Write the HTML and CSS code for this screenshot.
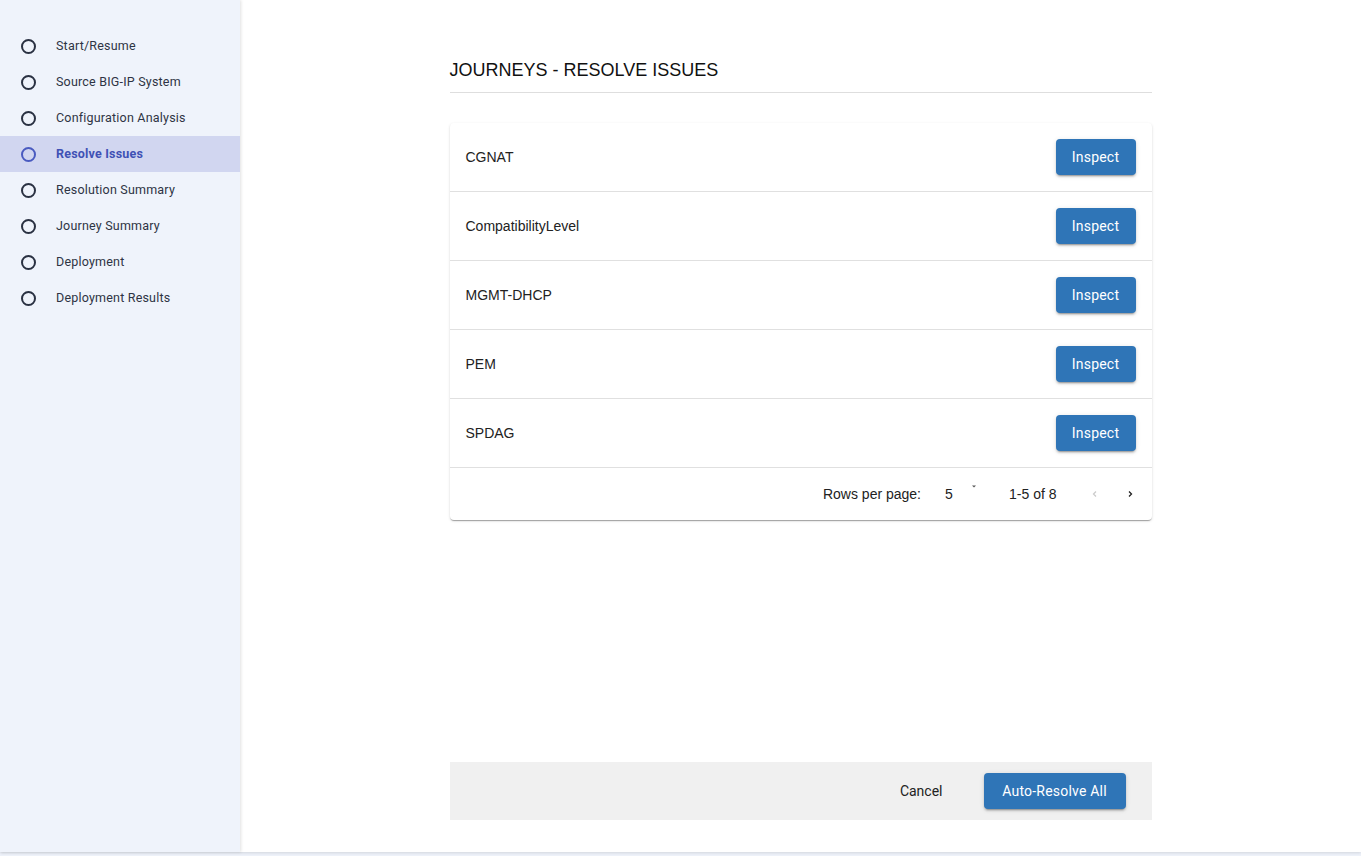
FILE: index.html
```html
<!DOCTYPE html>
<html>
<head>
<meta charset="utf-8">
<link rel="stylesheet" href="styles.css">
</head>
<body>
<div class="app">
  <aside class="sidebar">
    <ul class="steps">
      <li class="step"><span class="dot"></span><span class="label">Start/Resume</span></li>
      <li class="step"><span class="dot"></span><span class="label">Source BIG-IP System</span></li>
      <li class="step"><span class="dot"></span><span class="label">Configuration Analysis</span></li>
      <li class="step active"><span class="dot"></span><span class="label">Resolve Issues</span></li>
      <li class="step"><span class="dot"></span><span class="label">Resolution Summary</span></li>
      <li class="step"><span class="dot"></span><span class="label">Journey Summary</span></li>
      <li class="step"><span class="dot"></span><span class="label">Deployment</span></li>
      <li class="step"><span class="dot"></span><span class="label">Deployment Results</span></li>
    </ul>
  </aside>
  <main class="main">
    <div class="content">
      <h1 class="title">JOURNEYS - RESOLVE ISSUES</h1>
      <div class="card">
        <div class="row"><span class="name">CGNAT</span><button class="btn">Inspect</button></div>
        <div class="row"><span class="name">CompatibilityLevel</span><button class="btn">Inspect</button></div>
        <div class="row"><span class="name">MGMT-DHCP</span><button class="btn">Inspect</button></div>
        <div class="row"><span class="name">PEM</span><button class="btn">Inspect</button></div>
        <div class="row"><span class="name">SPDAG</span><button class="btn">Inspect</button></div>
        <div class="pager">
          <span class="rpp">Rows per page:</span>
          <span class="select"><span>5</span><svg class="caret" width="8" height="6" viewBox="0 0 8 6"><path d="M2 1.5h4L4 3.5z" fill="#555"/></svg></span>
          <span class="range">1-5 of 8</span>
          <span class="nav prev"><svg width="10" height="10" viewBox="0 0 10 10"><path d="M6 2.5L3.5 5L6 7.5" fill="none" stroke="#ccc" stroke-width="1.3"/></svg></span>
          <span class="nav next"><svg width="10" height="10" viewBox="0 0 10 10"><path d="M4 2.5L6.5 5L4 7.5" fill="none" stroke="#222" stroke-width="1.3"/></svg></span>
        </div>
      </div>
      <div class="spacer"></div>
      <div class="actions">
        <button class="text-btn">Cancel</button>
        <button class="btn big">Auto-Resolve All</button>
      </div>
    </div>
  </main>
</div>
</body>
</html>
```
FILE: styles.css
```css
* { box-sizing: border-box; }
html, body { margin: 0; padding: 0; }
body {
  background: #eef2fa;
  font-family: "Liberation Sans", Arial, sans-serif;
  color: #222;
  height: 856px;
  overflow: hidden;
}
.app {
  display: flex;
  height: 852px;
  background: #fff;
  box-shadow: 0 1px 3px rgba(0,0,0,0.12);
}
.sidebar {
  width: 240px;
  flex: none;
  background: #eff3fb;
  box-shadow: 1px 0 3px rgba(0,0,0,0.12);
  position: relative;
  z-index: 1;
  padding-top: 28px;
}
.steps { list-style: none; margin: 0; padding: 0; width: 240px; }
.step {
  display: flex;
  align-items: center;
  height: 36px;
  padding-left: 21px;
  font-family: Roboto, "Liberation Sans", sans-serif;
  font-size: 12.5px;
  letter-spacing: 0.2px;
  color: #2e3444;
}
.label { margin-top: -2px; }
.dot {
  width: 15px;
  height: 15px;
  border: 2px solid #2a3142;
  border-radius: 50%;
  margin-right: 20px;
  flex: none;
}
.step.active { background: #d1d6f0; color: #3f51b5; font-weight: 700; }
.step.active .dot { border-color: #4a5bc0; }
.main {
  flex: 1;
  display: flex;
  justify-content: center;
}
.content {
  width: 702px;
  display: flex;
  flex-direction: column;
  padding-top: 58px;
  padding-bottom: 32px;
}
.title {
  margin: 0;
  font-weight: 400;
  font-size: 18px;
  line-height: 24px;
  color: #111;
  padding-bottom: 10px;
  border-bottom: 1px solid #dedede;
}
.card {
  margin-top: 30px;
  background: #fff;
  border-radius: 4px;
  box-shadow: 0 2px 1px -1px rgba(0,0,0,0.2), 0 1px 1px 0 rgba(0,0,0,0.14), 0 1px 3px 0 rgba(0,0,0,0.12);
}
.row {
  height: 69px;
  display: flex;
  align-items: center;
  justify-content: space-between;
  padding: 0 16px;
  border-bottom: 1px solid #e0e0e0;
  font-size: 14px;
}
.name { color: #222; }
.btn {
  height: 36px;
  width: 80px;
  background: #2f75b7;
  color: #fff;
  border: none;
  border-radius: 4px;
  font-family: Roboto, "Liberation Sans", sans-serif;
  font-size: 14px;
  letter-spacing: 0.2px;
  box-shadow: 0 3px 1px -2px rgba(0,0,0,0.2), 0 2px 2px 0 rgba(0,0,0,0.14), 0 1px 5px 0 rgba(0,0,0,0.12);
  padding: 0;
}
.pager {
  height: 52px;
  display: flex;
  align-items: center;
  justify-content: flex-end;
  font-size: 14px;
  padding-right: 4px;
  color: #222;
}
.rpp { margin-right: 24px; }
.select { display: flex; align-items: flex-start; width: 44px; }
.caret { margin-left: 17px; margin-top: -2px; }
.range { margin-left: 20px; margin-right: 21px; }
.nav { width: 35px; display: flex; justify-content: center; align-items: center; }
.spacer { flex: 1; }
.actions {
  height: 58px;
  background: #f0f0f0;
  display: flex;
  align-items: center;
  justify-content: flex-end;
  padding-right: 26px;
}
.text-btn {
  background: none;
  border: none;
  font-family: Roboto, "Liberation Sans", sans-serif;
  font-size: 14px;
  color: #222;
  margin-right: 41px;
  padding: 0;
}
.btn.big { width: 142px; }
```
